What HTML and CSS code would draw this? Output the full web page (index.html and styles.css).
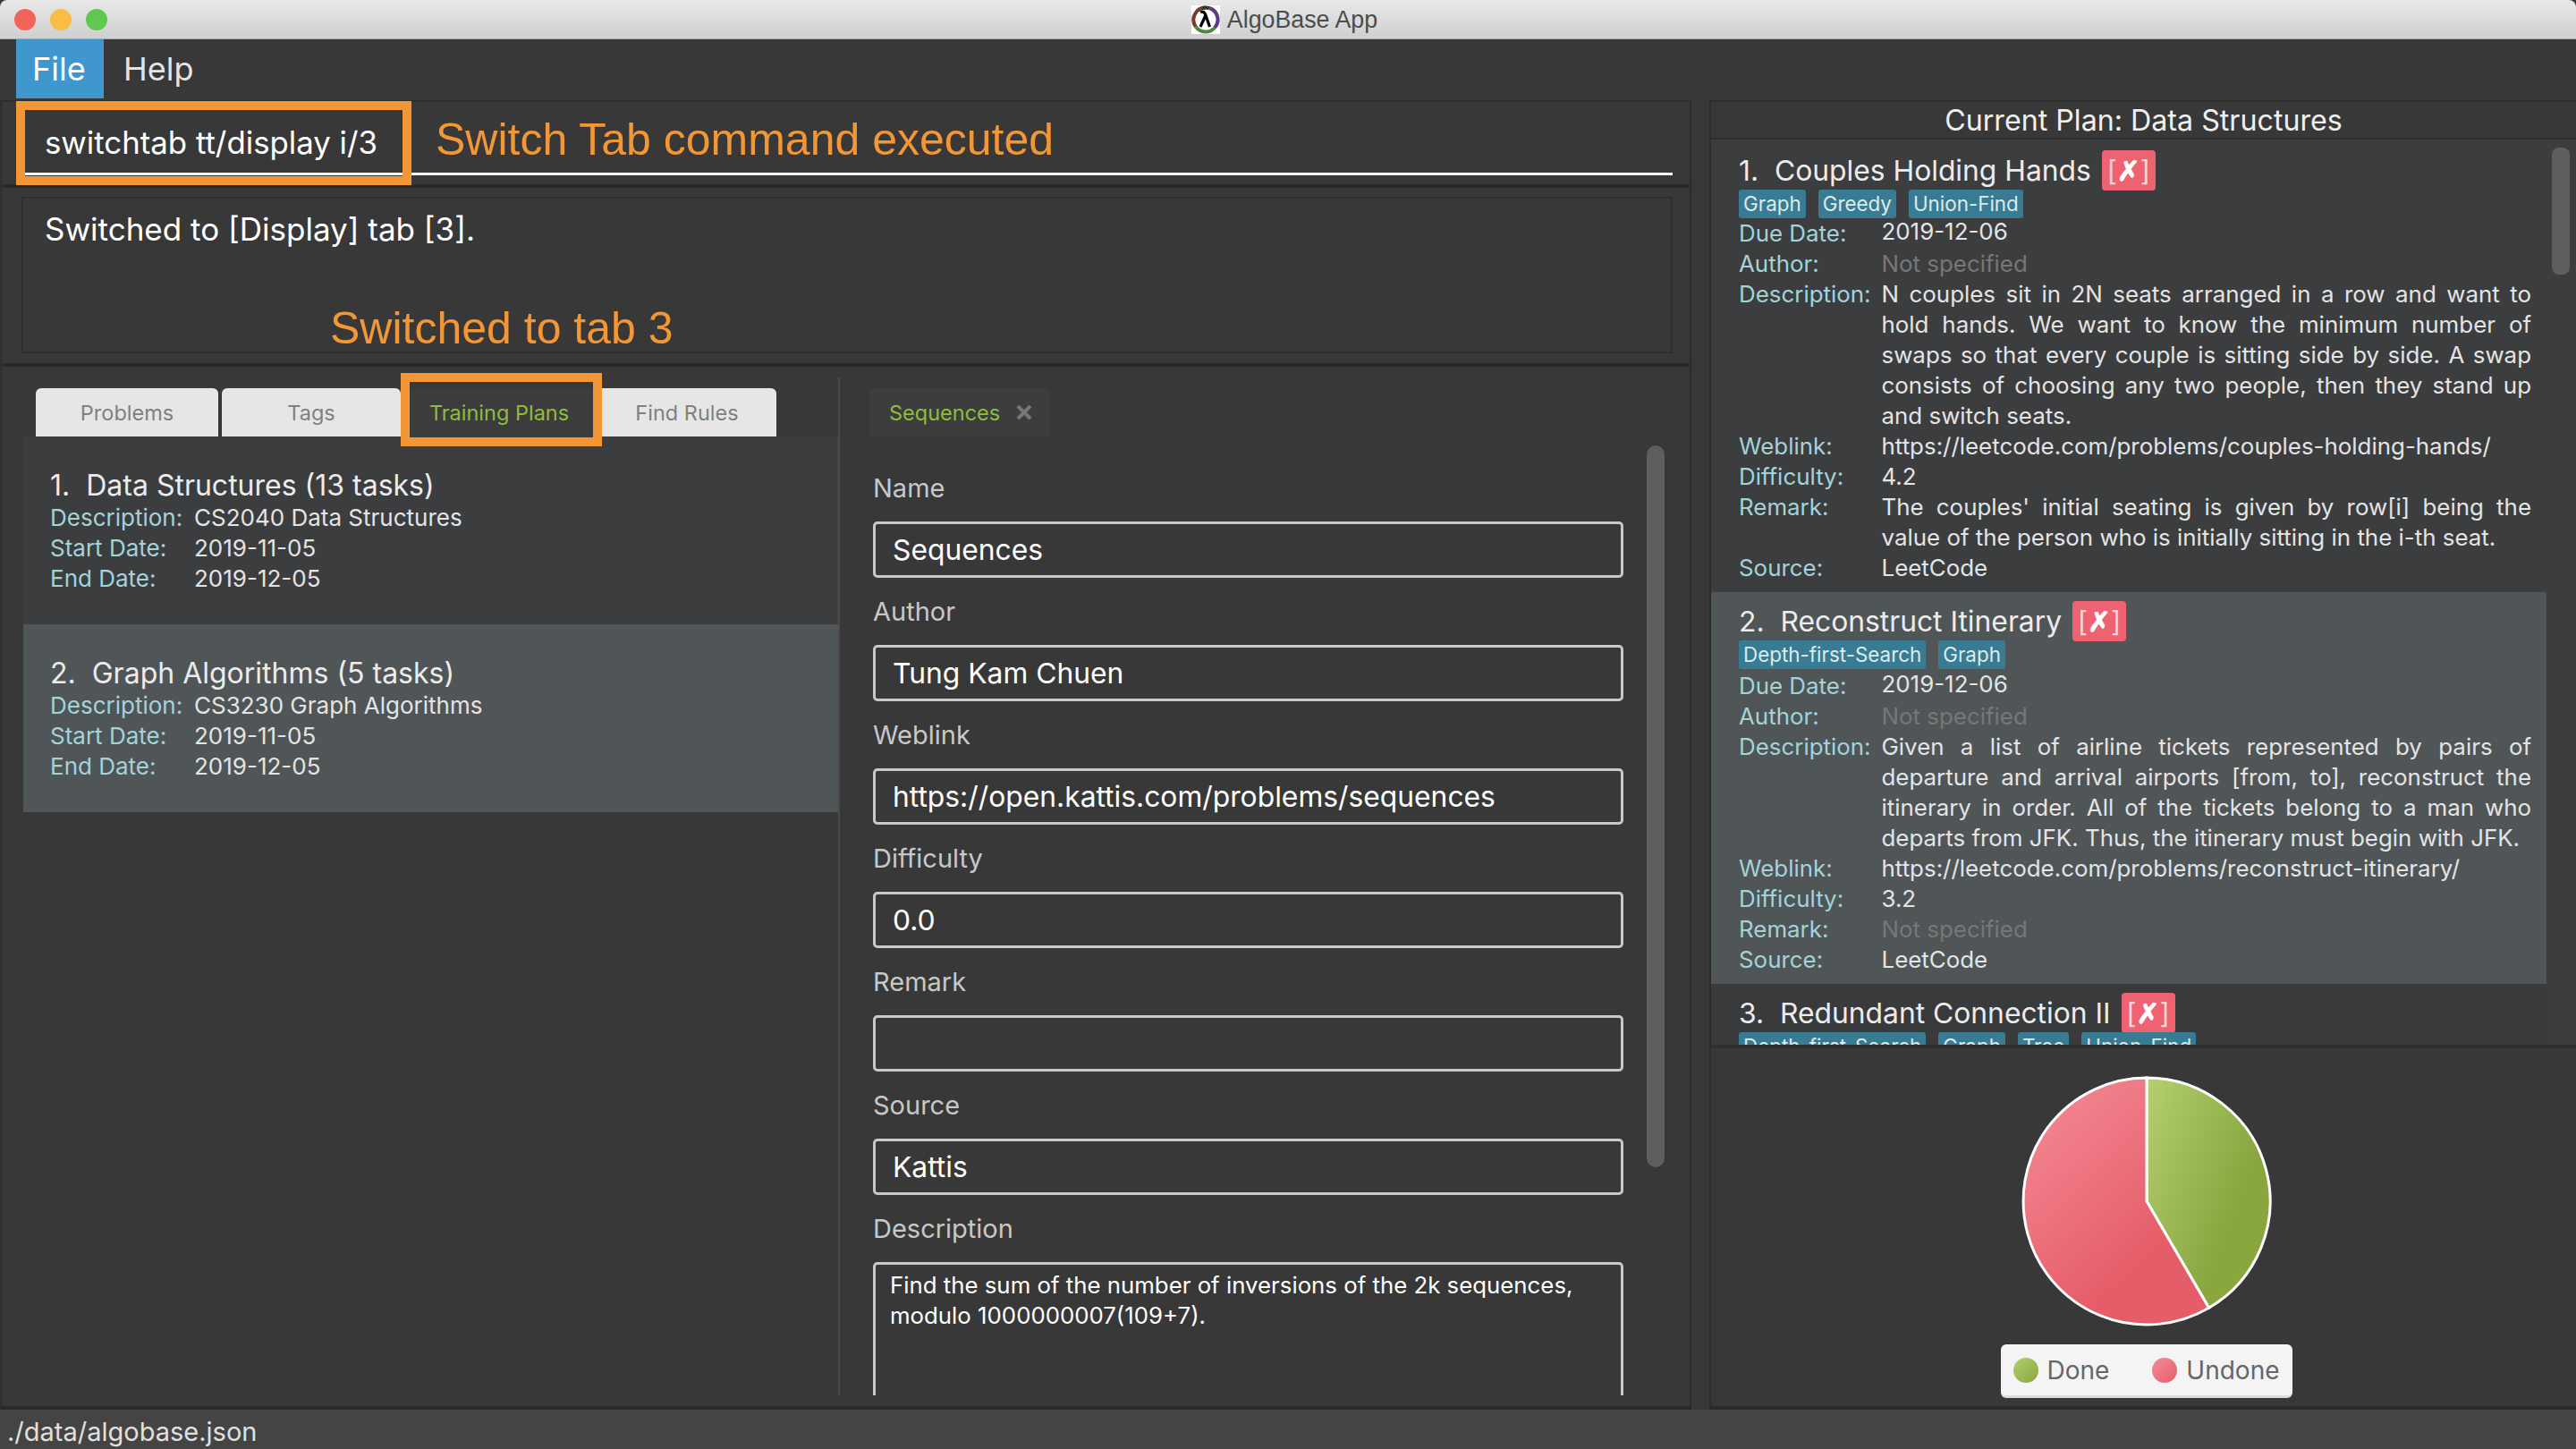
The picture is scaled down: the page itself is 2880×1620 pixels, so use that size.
FILE: index.html
```html
<!DOCTYPE html>
<html lang="en">
<head>
    <meta charset="UTF-8">
    <title>AlgoBase App</title>
    <link rel="stylesheet" href="styles.css">
</head>
<body>
<div class="window">
    <!-- Title bar -->
    <div class="titlebar">
        <div class="lights">
            <span class="light red"></span>
            <span class="light yellow"></span>
            <span class="light green"></span>
        </div>
        <div class="app-title">
            <svg class="app-icon" width="32" height="32" viewBox="0 0 32 32">
                <rect width="32" height="32" fill="#fff"/>
                <path d="M16 2.500A13.500 13.500 0 0 0 5 24" fill="none" stroke="#7a3a28" stroke-width="4"/>
                <path d="M5 24A13.500 13.500 0 0 0 26 25" fill="none" stroke="#4f8a3a" stroke-width="4"/>
                <path d="M26 25A13.500 13.500 0 0 0 20 3" fill="none" stroke="#5b3a86" stroke-width="4"/>
                <path d="M20 3A13.500 13.500 0 0 0 12 3" fill="none" stroke="#2a3a22" stroke-width="4"/>
                <path d="M10 7.500c3.500-1.500 5 .5 6.500 5l4 11.500M15.500 12L10 24" fill="none" stroke="#000" stroke-width="3.200"/>
            </svg>
            <span>AlgoBase App</span>
        </div>
    </div>

    <!-- Menu -->
    <div class="menubar">
        <div class="menu-item active">File</div>
        <div class="menu-item">Help</div>
    </div>

    <div class="main">
        <div class="left">
            <div class="command-bar">
                <div class="command-input">switchtab tt/display i/3</div>
            </div>
            <div class="result-bar">
                <div class="result-box">Switched to [Display] tab [3].</div>
            </div>

            <div class="split">
                <!-- Tabs and list -->
                <div class="list-col">
                    <div class="tabs">
                        <div class="tab w-problems">Problems</div>
                        <div class="tab w-tags">Tags</div>
                        <div class="tab w-plans selected">Training Plans</div>
                        <div class="tab w-rules">Find Rules</div>
                    </div>
                    <div class="plan-list">
                        <div class="plan-card">
                            <div class="plan-name">1.  Data Structures (13 tasks)</div>
                            <div class="plan-row"><span class="label">Description:</span><span>CS2040 Data Structures</span></div>
                            <div class="plan-row"><span class="label">Start Date:</span><span>2019-11-05</span></div>
                            <div class="plan-row"><span class="label">End Date:</span><span>2019-12-05</span></div>
                        </div>
                        <div class="plan-card current">
                            <div class="plan-name">2.  Graph Algorithms (5 tasks)</div>
                            <div class="plan-row"><span class="label">Description:</span><span>CS3230 Graph Algorithms</span></div>
                            <div class="plan-row"><span class="label">Start Date:</span><span>2019-11-05</span></div>
                            <div class="plan-row"><span class="label">End Date:</span><span>2019-12-05</span></div>
                        </div>
                    </div>
                </div>

                <!-- Detail form -->
                <div class="detail-col">
                    <div class="detail-tabs">
                        <div class="detail-tab">
                            <span>Sequences</span>
                            <svg class="tab-close" width="20" height="20" viewBox="0 0 20 20"><path d="M3 3l14 14M17 3L3 17" stroke="#777" stroke-width="4"/></svg>
                        </div>
                    </div>
                    <div class="detail-body">
                        <div class="form">
                            <div class="field"><div class="field-label">Name</div><div class="field-input">Sequences</div></div>
                            <div class="field"><div class="field-label">Author</div><div class="field-input">Tung Kam Chuen</div></div>
                            <div class="field"><div class="field-label">Weblink</div><div class="field-input">https://open.kattis.com/problems/sequences</div></div>
                            <div class="field"><div class="field-label">Difficulty</div><div class="field-input">0.0</div></div>
                            <div class="field"><div class="field-label">Remark</div><div class="field-input"></div></div>
                            <div class="field"><div class="field-label">Source</div><div class="field-input">Kattis</div></div>
                            <div class="field"><div class="field-label">Description</div><div class="field-area">Find the sum of the number of inversions of the 2k sequences, modulo 1000000007(109+7).</div></div>
                        </div>
                        <div class="form-scrollbar"></div>
                    </div>
                </div>
            </div>
        </div>

        <!-- Current plan -->
        <div class="right">
            <div class="plan-title">Current Plan: Data Structures</div>
            <div class="task-area">
                <div class="task-list">
                    <div class="task">
                        <div class="task-head"><span>1.  Couples Holding Hands</span><span class="mark">[<b>✗</b>]</span></div>
                        <div class="task-tags"><span class="tag">Graph</span><span class="tag">Greedy</span><span class="tag">Union-Find</span></div>
                        <div class="task-row row-due"><span class="label">Due Date:</span><span>2019-12-06</span></div>
                        <div class="task-row"><span class="label">Author:</span><span class="none">Not specified</span></div>
                        <div class="task-row"><span class="label">Description:</span><div><span class="jline">N couples sit in 2N seats arranged in a row and want to</span><span class="jline">hold hands. We want to know the minimum number of</span><span class="jline">swaps so that every couple is sitting side by side. A swap</span><span class="jline">consists of choosing any two people, then they stand up</span>and switch seats.</div></div>
                        <div class="task-row"><span class="label">Weblink:</span><span>https://leetcode.com/problems/couples-holding-hands/</span></div>
                        <div class="task-row"><span class="label">Difficulty:</span><span>4.2</span></div>
                        <div class="task-row"><span class="label">Remark:</span><div><span class="jline">The couples' initial seating is given by row[i] being the</span>value of the person who is initially sitting in the i-th seat.</div></div>
                        <div class="task-row"><span class="label">Source:</span><span>LeetCode</span></div>
                    </div>
                    <div class="task current">
                        <div class="task-head"><span>2.  Reconstruct Itinerary</span><span class="mark">[<b>✗</b>]</span></div>
                        <div class="task-tags"><span class="tag">Depth-first-Search</span><span class="tag">Graph</span></div>
                        <div class="task-row row-due"><span class="label">Due Date:</span><span>2019-12-06</span></div>
                        <div class="task-row"><span class="label">Author:</span><span class="none">Not specified</span></div>
                        <div class="task-row"><span class="label">Description:</span><div><span class="jline">Given a list of airline tickets represented by pairs of</span><span class="jline">departure and arrival airports [from, to], reconstruct the</span><span class="jline">itinerary in order. All of the tickets belong to a man who</span>departs from JFK. Thus, the itinerary must begin with JFK.</div></div>
                        <div class="task-row"><span class="label">Weblink:</span><span>https://leetcode.com/problems/reconstruct-itinerary/</span></div>
                        <div class="task-row"><span class="label">Difficulty:</span><span>3.2</span></div>
                        <div class="task-row"><span class="label">Remark:</span><span class="none">Not specified</span></div>
                        <div class="task-row"><span class="label">Source:</span><span>LeetCode</span></div>
                    </div>
                    <div class="task last">
                        <div class="task-head"><span>3.  Redundant Connection II</span><span class="mark">[<b>✗</b>]</span></div>
                        <div class="task-tags"><span class="tag">Depth-first-Search</span><span class="tag">Graph</span><span class="tag">Tree</span><span class="tag">Union-Find</span></div>
                    </div>
                </div>
                <div class="task-scroll"><div class="task-thumb"></div></div>
            </div>

            <div class="chart">
                <svg class="pie" width="284" height="284" viewBox="-142 -142 284 284">
                    <defs>
                        <linearGradient id="pieGreen" x1="0" y1="0" x2="1" y2="0.7">
                            <stop offset="0" stop-color="#b4d070"/>
                            <stop offset="0.75" stop-color="#8aa63f"/>
                        </linearGradient>
                        <linearGradient id="pieRed" x1="0" y1="0" x2="0.7" y2="1">
                            <stop offset="0" stop-color="#f58d98"/>
                            <stop offset="0.8" stop-color="#e55d69"/>
                        </linearGradient>
                    </defs>
                    <path d="M0 0L0 -138A138 138 0 0 1 69.600 119.200Z" fill="url(#pieGreen)" stroke="#fff" stroke-width="3"/>
                    <path d="M0 0L69.600 119.200A138 138 0 1 1 0 -138Z" fill="url(#pieRed)" stroke="#fff" stroke-width="3"/>
                </svg>
                <div class="legend">
                    <div class="legend-item"><span class="dot done"></span>Done</div>
                    <div class="legend-item"><span class="dot undone"></span>Undone</div>
                </div>
            </div>
        </div>
    </div>

    <div class="statusbar">./data/algobase.json</div>

    <!-- Tutorial callouts drawn on top of the app -->
    <div class="callout-box box-command"></div>
    <div class="callout-box box-tab"></div>
    <div class="callout-text text-command">Switch Tab command executed</div>
    <div class="callout-text text-result">Switched to tab 3</div>
</div>
</body>
</html>
```

FILE: styles.css
```css
* {
    box-sizing: border-box;
}
body {
    margin: 0;
    background-color: #383838;
    font-family: Inter, Roboto, "Liberation Sans", sans-serif;
    color: #e4e4e4;
}
.window {
    position: relative;
    width: 2880px;
    height: 1620px;
    display: flex;
    flex-direction: column;
    overflow: hidden;
    background-color: #383838;
}

/* title bar */
.titlebar {
    height: 44px;
    flex: none;
    position: relative;
    display: flex;
    justify-content: center;
    align-items: center;
    background: linear-gradient(#e9e9e9, #cfcfcf);
    border-bottom: 1px solid #a8a8a8;
    border-radius: 8px 8px 0 0;
}
.lights {
    position: absolute;
    left: 16px;
    top: 10px;
    display: flex;
    gap: 16px;
}
.light {
    width: 24px;
    height: 24px;
    border-radius: 50%;
}
.red { background-color: #f2645a; }
.yellow { background-color: #f8bd45; }
.green { background-color: #5fc84f; }
.app-title {
    display: flex;
    align-items: center;
    gap: 8px;
    margin-left: -8px;
    padding-top: 1px;
    font-family: "Liberation Sans", sans-serif;
    font-size: 26.800px;
    color: #4c4c4c;
}

/* menu */
.menubar {
    height: 68px;
    flex: none;
    display: flex;
    padding-left: 18px;
    font-size: 36px;
}
.menu-item {
    height: 66px;
    padding: 0 20px;
    line-height: 66px;
}
.menu-item.active {
    width: 98px;
    padding: 0 18px;
    background-color: #3f97cd;
    color: #fff;
}
.menu-item.active + .menu-item {
    padding-left: 22px;
}

.main {
    flex: 1;
    display: flex;
    min-height: 0;
}

/* left side */
.left {
    width: 1891px;
    flex: none;
    display: flex;
    flex-direction: column;
    border-left: 3px solid #303030;
    border-right: 2px solid #2c2c2c;
    border-bottom: 4px solid #2a2a2a;
    border-top: 2px solid #2c2c2c;
}
.command-bar {
    height: 96px;
    flex: none;
    padding: 0 19px 10px 25px;
    border-bottom: 4px solid #2a2a2a;
}
.command-input {
    height: 82px;
    padding: 10px 0 0 22px;
    line-height: 70px;
    font-size: 34.800px;
    color: #fff;
    border-bottom: 3px solid #fff;
}
.result-bar {
    height: 200px;
    flex: none;
    padding: 10px 19px 11px 21px;
    border-bottom: 4px solid #2a2a2a;
}
.result-box {
    height: 100%;
    padding: 13px 24px;
    border: 2px solid #2e2e2e;
    line-height: 42px;
    font-size: 35px;
    color: #fff;
}

.split {
    flex: 1;
    min-height: 0;
    display: flex;
    padding: 12px 0;
}
.list-col {
    width: 911px;
    margin-left: 23px;
    flex: none;
    display: flex;
    flex-direction: column;
}
.tabs {
    height: 66px;
    flex: none;
    padding: 12px 0 0 14px;
    display: flex;
    gap: 4px;
}
.tab {
    height: 54px;
    line-height: 55px;
    text-align: center;
    font-size: 23.500px;
    color: #808080;
    background-color: #e6e6e6;
    border-radius: 6px 6px 0 0;
}
.w-problems { width: 204px; }
.w-tags { width: 200px; }
.w-plans { width: 212px; }
.w-rules { width: 200px; }
.tab.selected {
    background-color: #3c3c3c;
    color: #90bc3e;
}
.plan-list {
    flex: 1;
}
.plan-card {
    height: 210px;
    padding: 33px 30px 0;
    background-color: #3c3d3f;
}
.plan-card.current {
    background-color: #505558;
}
.plan-name {
    height: 41px;
    line-height: 44px;
    font-size: 32px;
    white-space: pre;
    color: #ececec;
}
.plan-row {
    display: grid;
    grid-template-columns: 161px 1fr;
    height: 34px;
    line-height: 34px;
    font-size: 26px;
}
.label {
    color: #a3d3d9;
}
.detail-col {
    flex: 1;
    min-width: 0;
    display: flex;
    flex-direction: column;
    border-left: 2px solid #4a4a4a;
}
.detail-tabs {
    height: 66px;
    flex: none;
    padding: 12px 0 0 33px;
}
.detail-tab {
    width: 203px;
    height: 54px;
    padding-left: 22px;
    display: flex;
    align-items: center;
    gap: 17px;
    background-color: #3d3d3d;
    font-size: 23.500px;
    color: #90bc3e;
    border-radius: 6px 6px 0 0;
}
.tab-close {
    flex: none;
}
.detail-body {
    flex: 1;
    min-height: 0;
    display: flex;
    overflow: hidden;
}
.form {
    width: 902px;
    flex: none;
    padding: 41px 26px 0 37px;
}
.field {
    margin-bottom: 21px;
}
.field-label {
    height: 34px;
    margin-bottom: 20px;
    line-height: 34px;
    font-size: 29px;
    color: #c8c8c8;
}
.field-input, .field-area {
    border: 3px solid #c8c8c8;
    border-radius: 5px;
    color: #fff;
}
.field-input {
    height: 63px;
    padding-left: 19px;
    line-height: 57px;
    font-size: 31.800px;
}
.field-area {
    height: 240px;
    padding: 6px 40px 0 16px;
    line-height: 34px;
    font-size: 25.800px;
}
.form-scrollbar {
    width: 20px;
    height: 807px;
    margin-top: 10px;
    flex: none;
    background-color: #5e5e5e;
    border-radius: 10px;
}

/* right side */
.right {
    flex: 1;
    min-width: 0;
    margin-left: 20px;
    display: flex;
    flex-direction: column;
    border-left: 2px solid #2c2c2c;
    border-top: 2px solid #2c2c2c;
    border-bottom: 4px solid #2a2a2a;
}
.plan-title {
    height: 42px;
    flex: none;
    line-height: 41px;
    text-align: center;
    font-size: 32.200px;
    color: #f0f0f0;
    border-bottom: 2px solid #2c2c2c;
}
.task-area {
    height: 1012px;
    flex: none;
    display: flex;
    overflow: hidden;
    background-color: #3c3d3f;
}
.task-list {
    width: 934px;
    flex: none;
}
.task {
    padding: 10px 17px 10px 31px;
}
.task:first-child {
    padding-top: 12px;
}
.task:first-child .task-tags {
    margin-bottom: -2px;
}
.task.current {
    background-color: #505558;
}
.task.last {
    background-color: #393a3c;
}
.task-head {
    height: 44px;
    display: flex;
    align-items: center;
    gap: 12px;
    font-size: 31.800px;
    white-space: pre;
    color: #ececec;
}
.mark {
    width: 60px;
    height: 45px;
    line-height: 45px;
    text-align: center;
    font-size: 31px;
    color: #f7d5d9;
    background-color: #ee6272;
    border-radius: 4px;
}
.mark b {
    color: #fff;
    font-family: "DejaVu Sans", sans-serif;
    font-style: italic;
    -webkit-text-stroke: 1px #fff;
}
.task-tags {
    height: 32px;
    display: flex;
    gap: 14px;
}
.tag {
    height: 32px;
    padding: 0 5px;
    line-height: 32px;
    font-size: 22.400px;
    color: #dcecec;
    background-color: #397b92;
    border-radius: 3px;
}
.task-row {
    display: grid;
    grid-template-columns: 159.500px 1fr;
    line-height: 34px;
    font-size: 25.900px;
}
.row-due .label {
    margin-top: 2px;
}
.none {
    color: #777;
}
.jline {
    display: block;
    text-align: justify;
    text-align-last: justify;
}
.task-scroll {
    flex: 1;
    padding: 9px 0 0 6px;
    background-color: #3c3d3f;
}
.task-thumb {
    width: 20px;
    height: 142px;
    background-color: #5e5e5e;
    border-radius: 8px;
}
.chart {
    flex: 1;
    min-height: 0;
    display: flex;
    flex-direction: column;
    align-items: center;
    border-top: 4px solid #2f2f2f;
    padding-top: 29px;
}
.pie {
    flex: none;
    margin-left: 6px;
}
.legend {
    width: 326px;
    height: 60px;
    margin: 18px 0 0 6px;
    padding: 0 14px;
    display: flex;
    align-items: center;
    justify-content: space-between;
    font-size: 28px;
    color: #666;
    background-color: #f4f4f4;
    border-bottom: 3px solid #dcdcdc;
    border-radius: 6px;
}
.legend-item {
    display: flex;
    align-items: center;
    gap: 10px;
}
.dot {
    width: 28px;
    height: 28px;
    border-radius: 50%;
}
.dot.done { background: linear-gradient(135deg, #b4d070, #8aa63f); }
.dot.undone { background: linear-gradient(135deg, #f58d98, #e55d69); }

.statusbar {
    height: 44px;
    flex: none;
    padding-left: 8px;
    line-height: 50px;
    font-size: 29px;
    color: #e0e0e0;
    background-color: #444;
}

/* orange tutorial annotations */
.callout-box {
    position: absolute;
    border: 10px solid #f29636;
}
.box-command {
    left: 18px;
    top: 113px;
    width: 442px;
    height: 94px;
}
.box-tab {
    left: 448px;
    top: 417px;
    width: 225px;
    height: 82px;
}
.callout-text {
    position: absolute;
    font-family: "Liberation Sans", sans-serif;
    font-size: 50px;
    line-height: 60px;
    white-space: nowrap;
    color: #f29636;
}
.text-command {
    left: 487px;
    top: 126px;
}
.text-result {
    left: 369px;
    top: 337px;
}
```
